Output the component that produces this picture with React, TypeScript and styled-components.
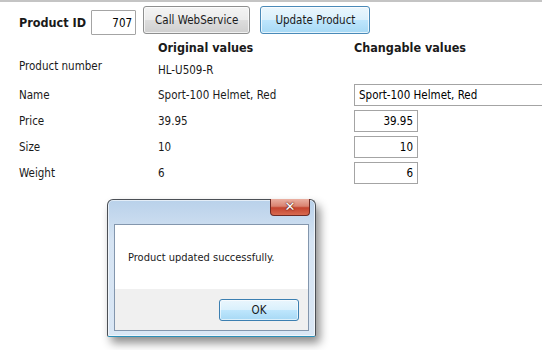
import styled, { createGlobalStyle } from 'styled-components';

const GlobalStyle = createGlobalStyle`
  body {
    margin: 0;
    background: #ffffff;
    font-family: "DejaVu Sans Condensed", "DejaVu Sans", sans-serif;
    font-size: 11.5px;
    color: #1a1a1a;
  }
`;

const rows = [
  { label: 'Name', value: 'Sport-100 Helmet, Red', wide: true },
  { label: 'Price', value: '39.95' },
  { label: 'Size', value: '10' },
  { label: 'Weight', value: '6' },
];

export default function App() {
  return (
    <Page>
      <GlobalStyle />
      <Toolbar>
        <IdLabel>Product ID</IdLabel>
        <IdInput defaultValue="707" />
        <Button>Call WebService</Button>
        <Button $active>Update Product</Button>
      </Toolbar>

      <Form>
        <span />
        <Heading>Original values</Heading>
        <Heading>Changable values</Heading>

        <Label $top>Product number</Label>
        <ReadOnly $low>HL-U509-R</ReadOnly>
        <span />

        {rows.map((r) => (
          <Row key={r.label}>
            <Label>{r.label}</Label>
            <ReadOnly>{r.value}</ReadOnly>
            <Field defaultValue={r.value} $wide={r.wide} />
          </Row>
        ))}
      </Form>

      <Dialog>
        <CloseButton>✕</CloseButton>
        <DialogBody>
          <Message>Product updated successfully.</Message>
          <Footer>
            <OkButton>OK</OkButton>
          </Footer>
        </DialogBody>
      </Dialog>
    </Page>
  );
}

const Page = styled.div`
  position: relative;
  width: 542px;
  height: 350px;
  border-top: 2px solid #c4c4c4;
  box-sizing: border-box;
  overflow: hidden;
`;

const Toolbar = styled.div`
  display: flex;
  align-items: flex-start;
  padding: 2px 0 0 19px;
  height: 32px;
  box-sizing: border-box;
`;

const IdLabel = styled.span`
  font-family: "DejaVu Sans Condensed", "DejaVu Sans", sans-serif;
  font-weight: bold;
  font-size: 12.5px;
  margin: 11px 5px 0 0;
`;

const IdInput = styled.input`
  width: 45px;
  height: 25px;
  box-sizing: border-box;
  border: 1px solid #a4a4a4;
  border-radius: 1px;
  padding: 0 3px;
  text-align: right;
  font: inherit;
  margin: 6px 7px 0 0;
`;

const Button = styled.button<{ $active?: boolean }>`
  height: 28px;
  padding: 0 ${(p) => (p.$active ? '14px' : '11px')};
  margin: 2px 10px 0 0;
  font: inherit;
  color: #1a1a1a;
  border-radius: 3px;
  border: 1px solid ${(p) => (p.$active ? '#4a8ab8' : '#8e8f8f')};
  background: ${(p) =>
    p.$active
      ? 'linear-gradient(#eaf6fd 0%, #d9f0fc 50%, #bee6fd 51%, #a7d9f5 100%)'
      : 'linear-gradient(#f4f4f4 0%, #ebebeb 50%, #dddddd 51%, #cfcfcf 100%)'};
  box-shadow: inset 0 0 0 1px rgba(255, 255, 255, 0.7);
`;

const Form = styled.div`
  display: grid;
  grid-template-columns: 139px 196px 1fr;
  grid-template-rows: 16px 20px repeat(4, 22px);
  row-gap: 4px;
  padding: 6px 0 0 19px;
  align-items: center;
`;

const Row = styled.div`
  display: contents;
`;

const Heading = styled.div`
  font-family: "DejaVu Sans Condensed", "DejaVu Sans", sans-serif;
  font-weight: bold;
  font-size: 12.5px;
  line-height: 16px;
`;

const Label = styled.div<{ $top?: boolean }>`
  align-self: ${(p) => (p.$top ? 'start' : 'center')};
  line-height: ${(p) => (p.$top ? '12px' : '22px')};
`;

const ReadOnly = styled.div<{ $low?: boolean }>`
  align-self: ${(p) => (p.$low ? 'start' : 'center')};
  line-height: ${(p) => (p.$low ? '12px' : '22px')};
  padding-top: ${(p) => (p.$low ? '4px' : '0')};
`;

const Field = styled.input<{ $wide?: boolean }>`
  width: ${(p) => (p.$wide ? '189px' : '64px')};
  height: 22px;
  box-sizing: border-box;
  border: 1px solid #a4a4a4;
  padding: 0 4px;
  font: inherit;
  text-align: ${(p) => (p.$wide ? 'left' : 'right')};
`;

const Dialog = styled.div`
  position: absolute;
  left: 107px;
  top: 197px;
  width: 209px;
  height: 138px;
  box-sizing: border-box;
  border: 1px solid #4b4f55;
  border-bottom-color: #2b8fb8;
  border-radius: 6px 6px 2px 2px;
  background: linear-gradient(#b9d1ea 0%, #d6e4f3 30%, #dae7f5 100%);
  box-shadow: 4px 6px 10px rgba(0, 0, 0, 0.45), inset 0 0 0 1px rgba(255, 255, 255, 0.6);
  padding: 24px 6px 5px 6px;
  display: flex;
`;

const CloseButton = styled.div`
  position: absolute;
  top: -1px;
  right: 5px;
  width: 40px;
  height: 17px;
  box-sizing: border-box;
  border: 1px solid #6d2a25;
  border-top: none;
  border-radius: 0 0 4px 4px;
  background: linear-gradient(#eab0a2 0%, #d98371 45%, #c4442f 55%, #d86a50 100%);
  color: #ffffff;
  font-family: "DejaVu Sans", sans-serif;
  font-weight: bold;
  font-size: 13px;
  line-height: 16px;
  text-align: center;
  text-shadow: 0 0 1px #5a1a12, 0 0 2px #5a1a12;
`;

const DialogBody = styled.div`
  flex: 1;
  display: flex;
  flex-direction: column;
  border: 1px solid #8396ad;
  background: #ffffff;
`;

const Message = styled.div`
  height: 64px;
  padding: 0 0 0 13px;
  display: flex;
  align-items: center;
  font-size: 11px;
  color: #1a1a1a;
`;

const Footer = styled.div`
  flex: 1;
  background: #f0f0f0;
  display: flex;
  align-items: center;
  justify-content: flex-end;
  padding-right: 9px;
`;

const OkButton = styled.button`
  width: 80px;
  height: 22px;
  font: inherit;
  color: #1a1a1a;
  border: 1px solid #3c7fb1;
  border-radius: 3px;
  background: linear-gradient(#eaf6fd 0%, #d9f0fc 50%, #bee6fd 51%, #a7d9f5 100%);
  box-shadow: inset 0 0 0 1px rgba(255, 255, 255, 0.6);
`;
